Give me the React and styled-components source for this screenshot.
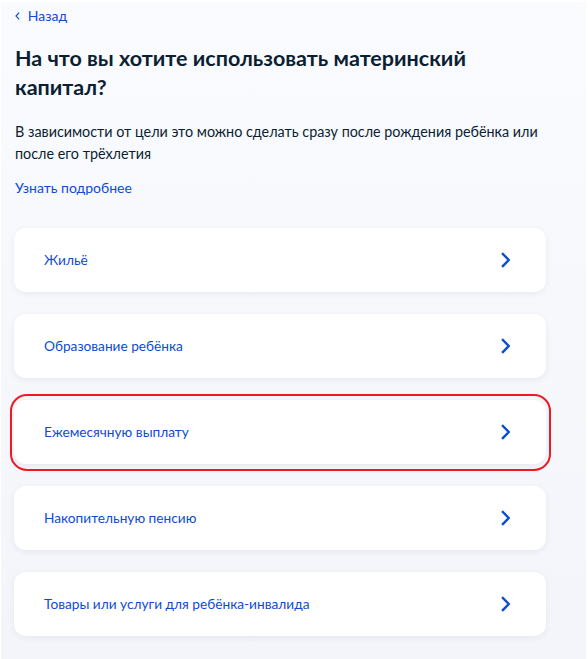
import React from "react";
import styled, { createGlobalStyle } from "styled-components";

const GlobalStyle = createGlobalStyle`
  html, body {
    margin: 0;
    padding: 0;
    background: #ffffff;
  }
  body {
    font-family: Lato, "Open Sans", "Noto Sans", sans-serif;
    color: #0b1f33;
    -webkit-font-smoothing: antialiased;
  }
  * { box-sizing: border-box; }
`;

const Page = styled.main`
  margin: 2px 2px 0 1px;
  min-height: 657px;
  padding: 2px 40px 20px 13px;
  background: linear-gradient(180deg, #fafbfe 0%, #f6f8fc 45%, #f3f5fa 100%);
`;

const BackLink = styled.a`
  display: inline-flex;
  align-items: center;
  gap: 8px;
  font-size: 14px;
  line-height: 20px;
  color: #0d4cd3;
  text-decoration: none;
  cursor: pointer;
  margin-left: 1px;
`;

const Title = styled.h1`
  margin: 18px 0 0 1px;
  font-size: 21.5px;
  line-height: 29px;
  font-weight: 700;
  color: #0b1f33;
`;

const Lead = styled.p`
  margin: 19px 0 0 1px;
  font-size: 14.35px;
  line-height: 22px;
  color: #0b1f33;
`;

const MoreLink = styled.a`
  display: inline-block;
  margin: 13px 0 0 1px;
  font-size: 14px;
  line-height: 20px;
  color: #0d4cd3;
  text-decoration: none;
  cursor: pointer;
`;

const OptionList = styled.ul`
  list-style: none;
  margin: 30px 0 0 0;
  padding: 0;
  display: flex;
  flex-direction: column;
  gap: 22px;
`;

const OptionCard = styled.li`
  position: relative;
  display: flex;
  align-items: center;
  justify-content: space-between;
  height: 64px;
  padding: 0 35px 0 30px;
  background: #ffffff;
  border-radius: 12px;
  box-shadow: 0 2px 6px rgba(30, 60, 120, 0.07);
  cursor: pointer;

  ${({ $marked }) =>
    $marked &&
    `
    &::after {
      content: "";
      position: absolute;
      top: -6px;
      bottom: -7px;
      left: -4px;
      right: -5px;
      border: 2.5px solid #ec1a24;
      border-radius: 17px;
      pointer-events: none;
    }
  `}
`;

const OptionLabel = styled.span`
  font-size: 13.7px;
  line-height: 20px;
  color: #0d4cd3;
`;

const Chevron = ({ dir = "right", size = 16, stroke = 2.4 }) => (
  <svg
    width={size * 0.6}
    height={size}
    viewBox="0 0 9 16"
    fill="none"
    stroke="#0d4cd3"
    strokeWidth={stroke}
    strokeLinecap="square"
    strokeLinejoin="miter"
    style={{ transform: dir === "left" ? "scaleX(-1)" : "none", flexShrink: 0 }}
  >
    <path d="M1.6 2 L7.4 8 L1.6 14" />
  </svg>
);

const options = [
  { id: "housing", label: "Жильё" },
  { id: "education", label: "Образование ребёнка" },
  { id: "monthly", label: "Ежемесячную выплату", marked: true },
  { id: "pension", label: "Накопительную пенсию" },
  { id: "goods", label: "Товары или услуги для ребёнка-инвалида" },
];

export default function App() {
  return (
    <>
      <GlobalStyle />
      <Page>
        <BackLink>
          <Chevron dir="left" size={8} stroke={2.2} />
          Назад
        </BackLink>
        <Title>
          На что вы хотите использовать материнский
          <br />
          капитал?
        </Title>
        <Lead>
          В зависимости от цели это можно сделать сразу после рождения ребёнка или
          <br />
          после его трёхлетия
        </Lead>
        <MoreLink>Узнать подробнее</MoreLink>
        <OptionList>
          {options.map((o) => (
            <OptionCard key={o.id} $marked={o.marked}>
              <OptionLabel>{o.label}</OptionLabel>
              <Chevron />
            </OptionCard>
          ))}
        </OptionList>
      </Page>
    </>
  );
}
